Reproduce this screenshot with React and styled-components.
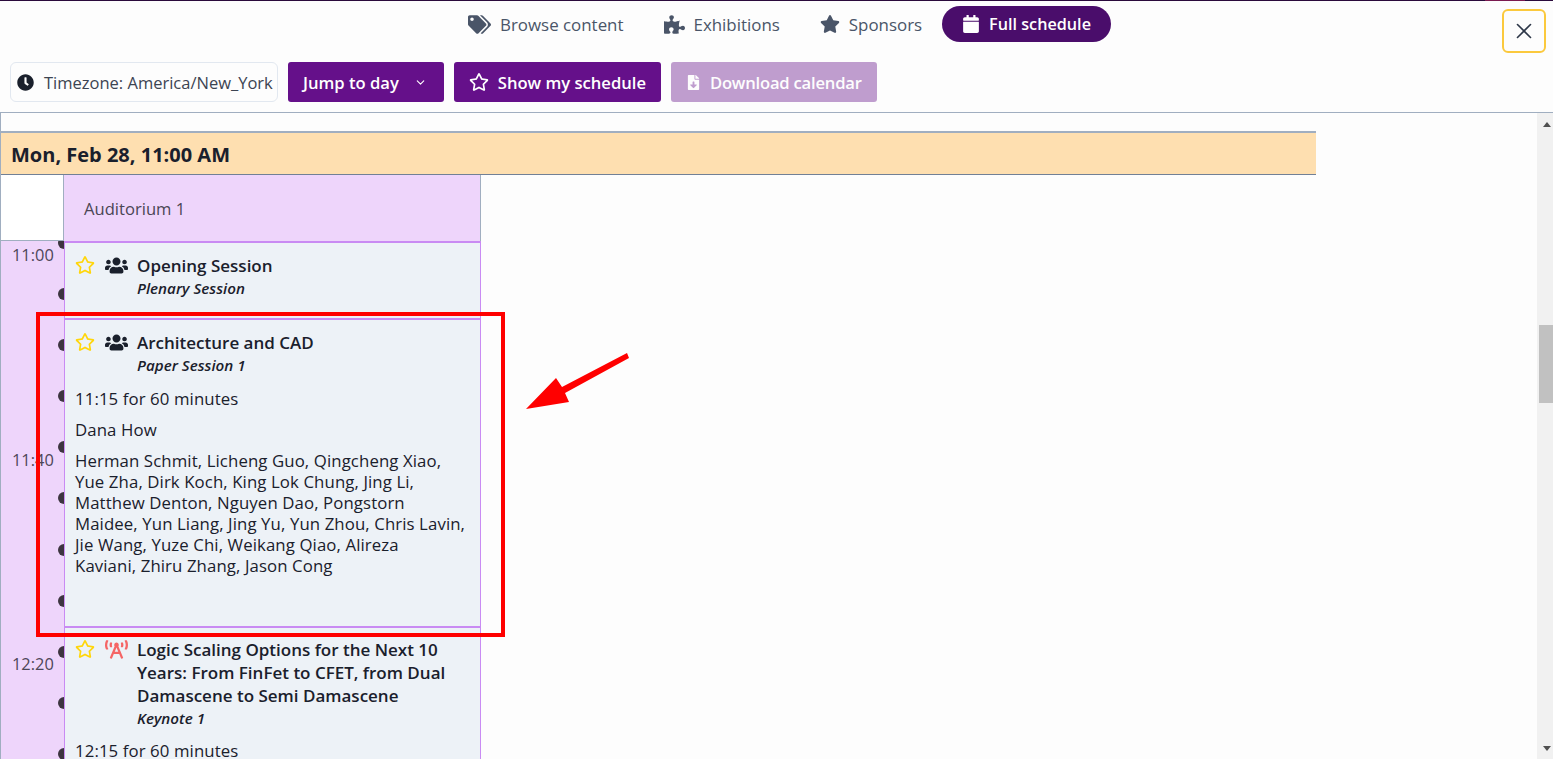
import React from 'react';
import styled, { createGlobalStyle } from 'styled-components';
import { FaTags, FaPuzzlePiece, FaStar, FaCalendar, FaClock, FaRegStar, FaFileDownload, FaUsers, FaBroadcastTower } from 'react-icons/fa';
import { FiChevronDown, FiX } from 'react-icons/fi';

const authors = `Herman Schmit, Licheng Guo, Qingcheng Xiao,
Yue Zha, Dirk Koch, King Lok Chung, Jing Li,
Matthew Denton, Nguyen Dao, Pongstorn
Maidee, Yun Liang, Jing Yu, Yun Zhou, Chris Lavin,
Jie Wang, Yuze Chi, Weikang Qiao, Alireza
Kaviani, Zhiru Zhang, Jason Cong`;

const App = () => {
  return (
    <Page>
      <GlobalStyle />
      <TopLine><TopAccent /></TopLine>
      <Header>
        <Tabs>
          <Tab><FaTags size={23} />Browse content</Tab>
          <Tab><FaPuzzlePiece size={21} />Exhibitions</Tab>
          <Tab><FaStar size={20} />Sponsors</Tab>
          <Tab $active><FaCalendar size={18} />Full schedule</Tab>
        </Tabs>
        <Toolbar>
          <Timezone><FaClock size={17} />Timezone: America/New_York</Timezone>
          <ActionButton>Jump to day<FiChevronDown size={13} style={{ margin: '0 2px 0 6px' }} /></ActionButton>
          <ActionButton><FaRegStar size={20} />Show my schedule</ActionButton>
          <ActionButton $disabled><FaFileDownload size={15} />Download calendar</ActionButton>
        </Toolbar>
        <CloseButton><FiX size={26} strokeWidth={1.5} /></CloseButton>
      </Header>
      <ScrollArea>
        <Content>
          <Spacer />
          <DateBand>Mon, Feb 28, 11:00 AM</DateBand>
          <RoomRow>
            <Corner />
            <Room>Auditorium 1</Room>
          </RoomRow>
          <Body>
            <TimeCol>
              <TimeLabel>11:00</TimeLabel>
              <TimeLabel>11:40</TimeLabel>
              <TimeLabel>12:20</TimeLabel>
              <DotRail>
                {Array.from({ length: 11 }).map((_, i) => <Dot key={i} />)}
              </DotRail>
            </TimeCol>
            <Sessions>
              <Card $height={77}>
                <CardHead>
                  <StarIcon><FaRegStar size={20} /></StarIcon>
                  <KindIcon><FaUsers size={23} /></KindIcon>
                  <div>
                    <Title>Opening Session</Title>
                    <Subtitle>Plenary Session</Subtitle>
                  </div>
                </CardHead>
              </Card>
              <Card $height={308}>
                <CardHead>
                  <StarIcon><FaRegStar size={20} /></StarIcon>
                  <KindIcon><FaUsers size={23} /></KindIcon>
                  <div>
                    <Title>Architecture and CAD</Title>
                    <Subtitle>Paper Session 1</Subtitle>
                  </div>
                </CardHead>
                <Detail $gap={13}>11:15 for 60 minutes</Detail>
                <Detail>Dana How</Detail>
                <Detail>{authors}</Detail>
              </Card>
              <Card $height={200} $pad={10}>
                <CardHead>
                  <StarIcon><FaRegStar size={20} /></StarIcon>
                  <KindIcon $keynote><FaBroadcastTower size={23} /></KindIcon>
                  <div>
                    <Title>Logic Scaling Options for the Next 10 Years: From FinFet to CFET, from Dual Damascene to Semi Damascene</Title>
                    <Subtitle>Keynote 1</Subtitle>
                  </div>
                </CardHead>
                <Detail $gap={12}>12:15 for 60 minutes</Detail>
              </Card>
            </Sessions>
          </Body>
        </Content>
        <Scrollbar>
          <ArrowUp />
          <Thumb />
          <ArrowDown />
        </Scrollbar>
      </ScrollArea>
      <Highlight />
      <Arrow viewBox="0 0 104 57" width="104" height="57">
        <path d="M101 0 L103 5 L39 40 L43 49 L0 56 L30 25 L36 34 Z" fill="#ff0000" />
      </Arrow>
    </Page>
  );
};

export default App;

const GlobalStyle = createGlobalStyle`
  html, body {
    margin: 0;
    height: 100%;
    overflow: hidden;
  }
  body {
    font-family: "Open Sans", "Noto Sans", "Liberation Sans", sans-serif;
    font-size: 16px;
    color: #1a202c;
    background: #fdfdfd;
  }
`;

const Page = styled.div`
  position: relative;
  height: 759px;
  display: flex;
  flex-direction: column;
  overflow: hidden;
  background: #fdfdfd;
`;

const TopLine = styled.div`
  height: 1px;
  flex: none;
  background: #2a0a3c;
`;

const TopAccent = styled.div`
  width: 40px;
  height: 1px;
  margin-left: 1485px;
  background: #7a1a50;
`;

const Header = styled.header`
  height: 112px;
  flex: none;
  box-sizing: border-box;
  padding-top: 5px;
  border-bottom: 1px solid #a0aec0;
`;

const Tabs = styled.nav`
  display: flex;
  justify-content: center;
  height: 36px;
  padding-left: 6px;
`;

const Tab = styled.div`
  display: flex;
  align-items: center;
  gap: 9px;
  padding: 0 20px;
  border-radius: 18px;
  font-size: ${props => props.$active ? 16.2 : 16.9}px;
  font-weight: ${props => props.$active ? 600 : 500};
  color: ${props => props.$active ? '#fff' : '#4a5568'};
  background: ${props => props.$active ? '#4a0d6b' : 'transparent'};
`;

const Toolbar = styled.div`
  display: flex;
  gap: 10px;
  margin-top: 20px;
  padding-left: 10px;
`;

const Timezone = styled.div`
  width: 268px;
  height: 40px;
  box-sizing: border-box;
  display: flex;
  align-items: center;
  gap: 10px;
  padding-left: 6px;
  border: 1px solid #e2e8f0;
  border-radius: 6px;
  color: #3c4452;
  font-size: 16.5px;
  white-space: nowrap;
  svg {
    color: #1a202c;
  }
`;

const ActionButton = styled.button`
  height: 40px;
  display: flex;
  align-items: center;
  gap: 9px;
  padding: 0 15px;
  border: 0;
  border-radius: 3px;
  font-family: inherit;
  font-size: 16.6px;
  font-weight: 600;
  letter-spacing: ${props => props.$disabled ? '-0.2px' : '0'};
  white-space: nowrap;
  color: #fff;
  background: #65108a;
  opacity: ${props => props.$disabled ? 0.4 : 1};
`;

const CloseButton = styled.button`
  position: absolute;
  top: 9px;
  right: 7px;
  width: 44px;
  height: 44px;
  display: flex;
  align-items: center;
  justify-content: center;
  padding: 0;
  background: transparent;
  color: #2d3748;
  border: 2px solid #fbc93d;
  border-radius: 6px;
`;

const ScrollArea = styled.main`
  flex: 1;
  min-height: 0;
  display: flex;
`;

const Content = styled.div`
  flex: 1;
  min-width: 0;
  overflow: hidden;
  border-left: 1px solid #a0aec0;
`;

const Spacer = styled.div`
  width: 1315px;
  height: 18px;
`;

const DateBand = styled.div`
  width: 1315px;
  height: 44px;
  box-sizing: border-box;
  display: flex;
  align-items: center;
  padding: 1px 0 0 10px;
  background: #fedfb0;
  border-top: 2px solid #a0aec0;
  border-bottom: 1px solid #718096;
  font-size: 20px;
  font-weight: 700;
`;

const RoomRow = styled.div`
  display: flex;
  height: 66px;
`;

const Corner = styled.div`
  width: 62px;
  background: #fff;
  border-right: 1px solid #a0aec0;
  border-bottom: 1px solid #a0aec0;
`;

const Room = styled.div`
  width: 396px;
  display: flex;
  align-items: center;
  padding-left: 20px;
  background: #eed5fb;
  border-right: 1px solid #a0aec0;
  color: #4a4654;
  font-size: 16.6px;
`;

const Body = styled.div`
  display: flex;
  align-items: flex-start;
`;

const TimeCol = styled.div`
  position: relative;
  width: 63px;
  height: 600px;
  flex: none;
  box-sizing: border-box;
  overflow: hidden;
  background: #eed5fb;
  padding-top: 1px;
`;

const TimeLabel = styled.div`
  height: 204.5px;
  padding-left: 11px;
  padding-top: 1px;
  box-sizing: border-box;
  line-height: 24px;
  font-size: 16.4px;
  color: #4d4658;
`;

const DotRail = styled.div`
  position: absolute;
  top: -4px;
  right: -6px;
  display: flex;
  flex-direction: column;
  gap: 39.1px;
`;

const Dot = styled.span`
  width: 12px;
  height: 12px;
  border-radius: 50%;
  background: #3d3540;
`;

const Sessions = styled.div`
  width: 417px;
  flex: none;
`;

const Card = styled.section`
  height: ${props => props.$height}px;
  box-sizing: border-box;
  padding: ${props => props.$pad || 11}px 10px 0;
  background: #edf2f7;
  border: 1px solid #c98bf3;
  border-top-width: 2px;
  border-bottom: 0;
`;

const CardHead = styled.div`
  display: flex;
  align-items: flex-start;
`;

const StarIcon = styled.span`
  width: 30px;
  flex: none;
  color: #ffd60a;
  line-height: 0;
  padding-top: 1px;
`;

const KindIcon = styled.span`
  width: 32px;
  flex: none;
  line-height: 0;
  color: ${props => props.$keynote ? '#f56565' : '#1a202c'};
`;

const Title = styled.div`
  font-size: 17px;
  font-weight: 600;
  line-height: 23px;
`;

const Subtitle = styled.div`
  margin-top: 1px;
  font-size: 15.2px;
  font-weight: 600;
  font-style: italic;
  line-height: 20px;
`;

const Detail = styled.p`
  margin: ${props => props.$gap || 10}px 0 0;
  font-size: 16.8px;
  line-height: 21px;
  letter-spacing: 0.1px;
  white-space: pre-line;
`;

const Scrollbar = styled.aside`
  width: 16px;
  flex: none;
  display: flex;
  flex-direction: column;
  background: #f1f1f1;
`;

const ArrowUp = styled.div`
  width: 0;
  height: 0;
  margin: 9px 0 0 6px;
  border-left: 4.5px solid transparent;
  border-right: 4.5px solid transparent;
  border-bottom: 5px solid #505050;
`;

const Thumb = styled.div`
  height: 78px;
  margin: 198px 0 0 2px;
  background: #c1c1c1;
`;

const ArrowDown = styled.div`
  width: 0;
  height: 0;
  margin: auto 0 8px 6px;
  border-left: 4.5px solid transparent;
  border-right: 4.5px solid transparent;
  border-top: 5px solid #505050;
`;

const Highlight = styled.div`
  position: absolute;
  left: 36px;
  top: 312px;
  width: 469px;
  height: 325px;
  box-sizing: border-box;
  border: 4px solid #ff0000;
`;

const Arrow = styled.svg`
  position: absolute;
  left: 526px;
  top: 353px;
`;
